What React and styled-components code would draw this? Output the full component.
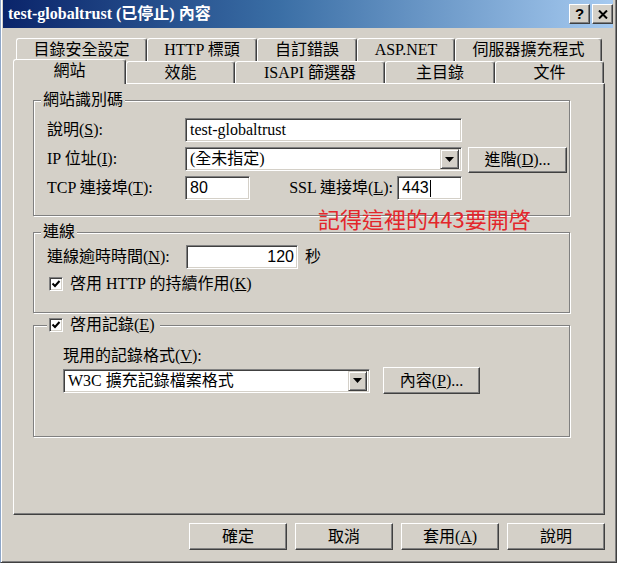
import React from 'react';
import styled, { createGlobalStyle } from 'styled-components';

const face = '#d4d0c8';

const GlobalStyle = createGlobalStyle`
  html, body { margin: 0; padding: 0; background: ${face}; }
  body {
    font-family: "Liberation Serif", "Noto Sans CJK TC", serif;
    font-size: 16px;
    line-height: 18px;
    color: #000;
  }
  * { box-sizing: border-box; }
`;

const Window = styled.div`
  width: 617px;
  height: 563px;
  background: ${face};
  border: 1px solid;
  border-top: 0;
  border-color: ${face} #404040 #404040 #8ea6c8;
  box-shadow: inset 1px 0 #fff, inset -1px -1px #808080;
  padding: 0 3px 0 2px;
  display: flex;
  flex-direction: column;
`;

const TitleBar = styled.div`
  height: 28px;
  flex: none;
  display: flex;
  align-items: center;
  padding: 0 0 0 5px;
  background: linear-gradient(to right, #0a246a 0%, #3a6ea5 45%, #a6caf0 100%);
  color: #fff;
  font-weight: bold;
  font-size: 16px;
  > span { flex: 1; white-space: nowrap; }
`;

const CaptionButton = styled.div`
  width: 21px;
  height: 20px;
  margin-left: 2px;
  background: ${face};
  border: 1px solid;
  border-color: #fff #404040 #404040 #fff;
  box-shadow: inset -1px -1px #808080;
  display: flex;
  align-items: center;
  justify-content: center;
  color: #000;
  font-family: "Liberation Sans", sans-serif;
  font-weight: bold;
  font-size: 15px;
`;

const Body = styled.div`
  flex: 1;
  padding: 10px 8px 0 10px;
  display: flex;
  flex-direction: column;
`;

const TabRow = styled.div`
  display: flex;
  height: ${p => p.$h}px;
  margin: 0 ${p => p.$right}px 0 ${p => p.$left}px;
`;

const Tab = styled.div`
  flex: 0 0 ${p => p.$w}px;
  height: ${p => (p.$active ? '25px' : 'auto')};
  margin-top: ${p => (p.$active ? '-2px' : '0')};
  position: ${p => (p.$active ? 'relative' : 'static')};
  z-index: ${p => (p.$active ? 1 : 'auto')};
  display: flex;
  align-items: center;
  justify-content: center;
  padding-bottom: ${p => (p.$active ? '3px' : '0')};
  background: ${face};
  border-top: 1px solid #fff;
  border-left: 1px solid #fff;
  border-right: 1px solid #404040;
  border-radius: 3px 3px 0 0;
  box-shadow: inset -1px 0 #808080;
  white-space: nowrap;
`;

const Panel = styled.div`
  position: relative;
  height: 432px;
  flex: none;
  border: 1px solid;
  border-color: #fff #404040 #404040 #fff;
  box-shadow: inset -1px -1px #808080;
  padding: 7px 34px 0 19px;
`;

const Group = styled.fieldset`
  margin: ${p => p.$gap}px 0 0;
  padding: ${p => p.$pad};
  border: 1px solid #808080;
  box-shadow: inset 1px 1px #fff, 1px 1px #fff;
  min-width: 0;
`;

const Legend = styled.legend`
  margin-left: ${p => p.$ml}px;
  padding: 0 ${p => p.$pr || 2}px 0 2px;
  height: 18px;
  line-height: 18px;
  display: flex;
  align-items: center;
  gap: 7px;
  background: ${face};
`;

const FormGrid = styled.div`
  display: grid;
  grid-template-columns: ${p => p.$cols};
  row-gap: ${p => p.$rowGap}px;
  align-items: center;
`;

const Label = styled.div`
  white-space: nowrap;
  width: ${p => (p.$w ? `${p.$w}px` : 'auto')};
  flex: none;
  text-align: ${p => (p.$right ? 'right' : 'left')};
  padding-right: ${p => (p.$right ? '4px' : '0')};
`;

const Field = styled.div`
  height: 24px;
  width: ${p => (p.$w ? `${p.$w}px` : '100%')};
  flex: none;
  background: #fff;
  border: 1px solid;
  border-color: #808080 #fff #fff #808080;
  box-shadow: inset 1px 1px #404040, inset -1px -1px ${face};
  display: flex;
  align-items: center;
  justify-content: ${p => (p.$right ? 'flex-end' : 'flex-start')};
  padding: 0 ${p => (p.$right ? 3 : 4)}px 0 4px;
  white-space: nowrap;
  font-family: ${p => (p.$sans ? '"Liberation Sans", "Noto Sans CJK TC", sans-serif' : 'inherit')};
`;

const Caret = styled.span`
  width: 1px;
  height: 17px;
  background: #000;
  margin-left: 1px;
`;

const Select = styled(Field)`
  padding-right: 2px;
  > span { flex: 1; }
`;

const ArrowButton = styled.div`
  width: 19px;
  height: 20px;
  background: ${face};
  border: 1px solid;
  border-color: ${face} #404040 #404040 ${face};
  box-shadow: inset 1px 1px #fff, inset -1px -1px #808080;
  display: flex;
  align-items: center;
  justify-content: center;
`;

const Button = styled.button`
  width: ${p => p.$w}px;
  height: ${p => p.$h}px;
  margin: ${p => p.$m || 0};
  flex: none;
  padding: 0;
  font: inherit;
  color: #000;
  background: ${face};
  border: 1px solid;
  border-color: #fff #404040 #404040 #fff;
  box-shadow: inset -1px -1px #808080;
  white-space: nowrap;
`;

const PortRow = styled.div`
  display: flex;
  align-items: center;
  > div:nth-child(2) { flex: 1; }
`;

const InlineRow = styled.div`
  display: flex;
  align-items: center;
  gap: ${p => p.$gap}px;
  margin: ${p => p.$m || 0};
`;

const Box = styled.span`
  width: 14px;
  height: 14px;
  flex: none;
  margin-left: ${p => p.$ml || 0}px;
  background: #fff;
  border: 1px solid;
  border-color: #808080 #fff #fff #808080;
  box-shadow: inset 1px 1px #404040, inset -1px -1px ${face};
  display: inline-flex;
  align-items: center;
  justify-content: center;
`;

const Note = styled.div`
  position: absolute;
  top: 121px;
  left: 304px;
  color: #e3262b;
  font-family: "Noto Sans CJK TC", sans-serif;
  font-size: 22px;
  line-height: 26px;
  white-space: nowrap;
`;

const Footer = styled.div`
  display: flex;
  justify-content: flex-end;
  gap: 8px;
  margin-top: 8px;
`;

const Checkbox = ({ ml }) => (
  <Box $ml={ml}>
    <svg width="10" height="10" viewBox="0 0 10 10">
      <path d="M1.5 4.5 L4 7 L8.5 2" fill="none" stroke="#000" strokeWidth="2" />
    </svg>
  </Box>
);

const Dropdown = ({ children, w }) => (
  <Select $w={w}>
    <span>{children}</span>
    <ArrowButton>
      <svg width="9" height="5" viewBox="0 0 9 5">
        <path d="M0 0 H9 L4.5 5 Z" fill="#000" />
      </svg>
    </ArrowButton>
  </Select>
);

const backTabs = [
  ['目錄安全設定', 131],
  ['HTTP 標頭', 110],
  ['自訂錯誤', 100],
  ['ASP.NET', 98],
  ['伺服器擴充程式', 147],
];

const frontTabs = [
  ['網站', 113, true],
  ['效能', 109],
  ['ISAPI 篩選器', 150],
  ['主目錄', 110],
  ['文件', 109],
];

export default function App() {
  return (
    <>
      <GlobalStyle />
      <Window>
        <TitleBar>
          <span>test-globaltrust (已停止) 內容</span>
          <CaptionButton>?</CaptionButton>
          <CaptionButton>
            <svg width="10" height="9" viewBox="0 0 10 9">
              <path d="M1 0.5 L9 8.5 M9 0.5 L1 8.5" stroke="#000" strokeWidth="2" />
            </svg>
          </CaptionButton>
        </TitleBar>
        <Body>
          <TabRow $h={23} $left={3} $right={3}>
            {backTabs.map(([t, w]) => (
              <Tab key={t} $w={w}>{t}</Tab>
            ))}
          </TabRow>
          <TabRow $h={22} $left={0} $right={1}>
            {frontTabs.map(([t, w, active]) => (
              <Tab key={t} $w={w} $active={active}>{t}</Tab>
            ))}
          </TabRow>
          <Panel>
            <Group $gap={0} $pad="9px 0 15px 13px">
              <Legend $ml={-6}>網站識別碼</Legend>
              <FormGrid $cols="138px 277px auto" $rowGap={5}>
                <Label>說明(<u>S</u>):</Label>
                <Field>test-globaltrust</Field>
                <div />
                <Label>IP 位址(<u>I</u>):</Label>
                <Dropdown>(全未指定)</Dropdown>
                <Button $w={99} $h={26} $m="0 0 -2px 6px">進階(<u>D</u>)...</Button>
                <Label>TCP 連接埠(<u>T</u>):</Label>
                <PortRow>
                  <Field $w={65} $sans>80</Field>
                  <Label $right>SSL 連接埠(<u>L</u>):</Label>
                  <Field $w={65} $sans>443<Caret /></Field>
                </PortRow>
              </FormGrid>
            </Group>

            <Group $gap={7} $pad="4px 0 19px 13px">
              <Legend $ml={-6}>連線</Legend>
              <InlineRow $gap={7}>
                <Label $w={132}>連線逾時時間(<u>N</u>):</Label>
                <Field $w={112} $right $sans>120</Field>
                <span>秒</span>
              </InlineRow>
              <InlineRow $gap={7} $m="6px 0 0">
                <Checkbox ml={2} />
                <span>啓用 HTTP 的持續作用(<u>K</u>)</span>
              </InlineRow>
            </Group>

            <Group $gap={3} $pad="13px 0 42px 29px">
              <Legend $ml={-16} $pr={6}>
                <Checkbox />
                <span>啓用記錄(<u>E</u>)</span>
              </Legend>
              <Label>現用的記錄格式(<u>V</u>):</Label>
              <InlineRow $gap={13} $m="2px 0 0">
                <Dropdown w={307}>W3C 擴充記錄檔案格式</Dropdown>
                <Button $w={97} $h={27}>內容(<u>P</u>)...</Button>
              </InlineRow>
            </Group>

            <Note>記得這裡的443要開啓</Note>
          </Panel>
          <Footer>
            <Button $w={98} $h={27}>確定</Button>
            <Button $w={98} $h={27}>取消</Button>
            <Button $w={98} $h={27}>套用(<u>A</u>)</Button>
            <Button $w={98} $h={27}>說明</Button>
          </Footer>
        </Body>
      </Window>
    </>
  );
}
